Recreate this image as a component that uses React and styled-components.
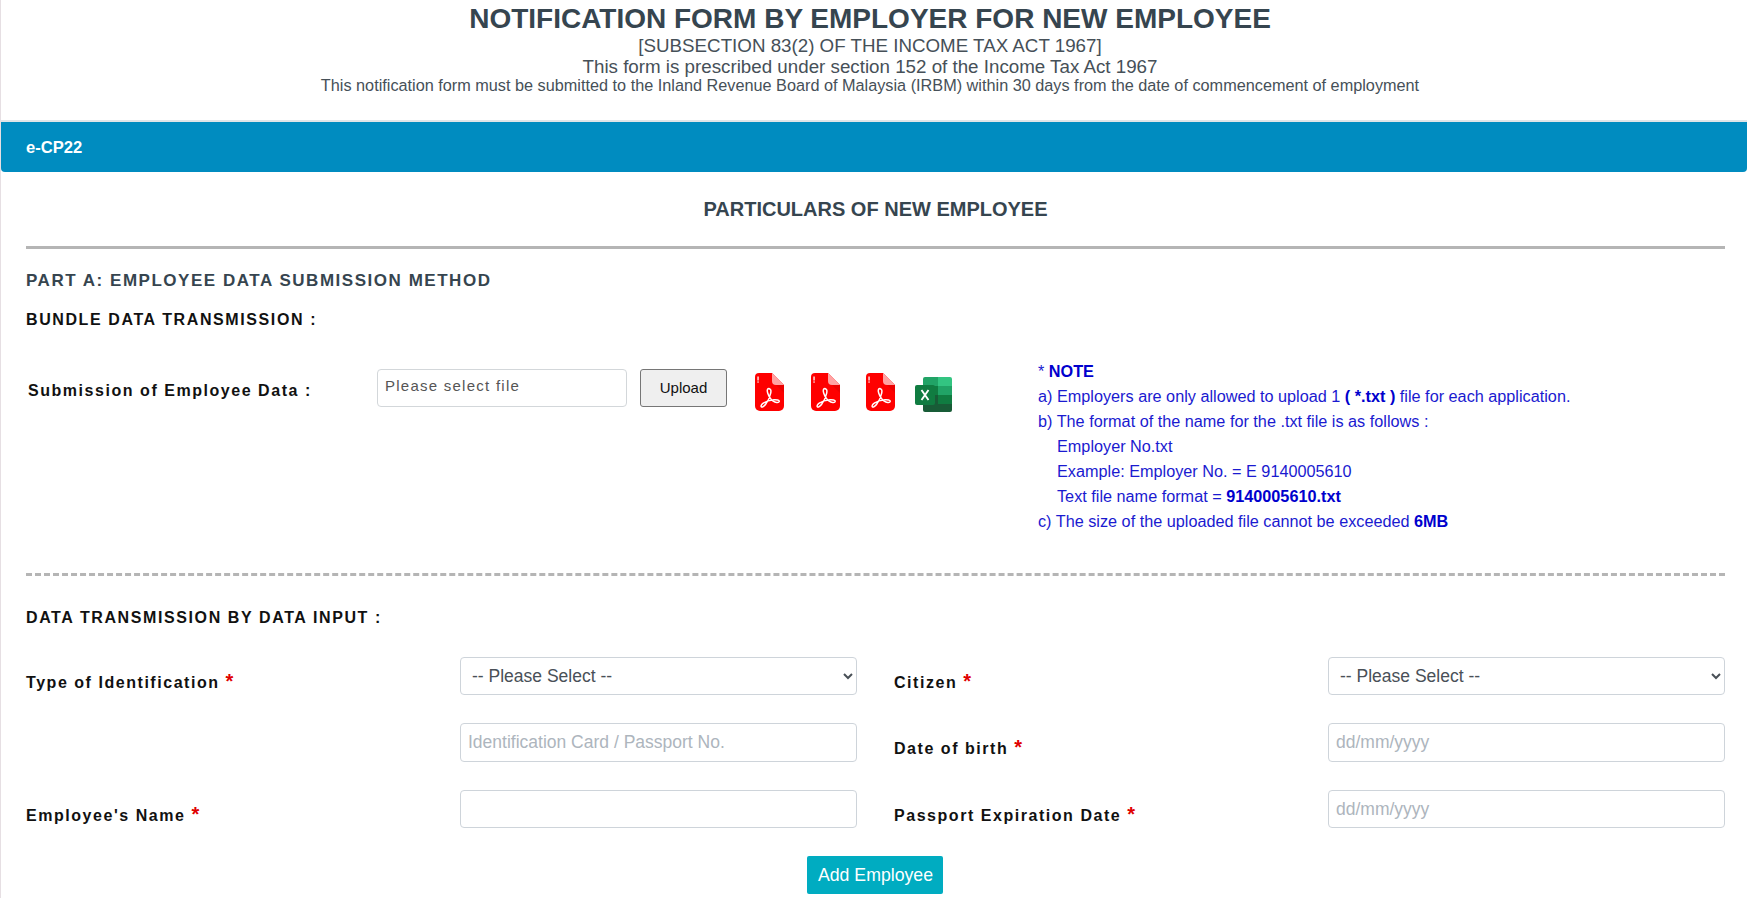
import React from "react";
import styled, { createGlobalStyle } from "styled-components";

const GlobalStyle = createGlobalStyle`
  html, body {
    margin: 0;
    padding: 0;
    background: #fff;
    overflow: hidden;
  }
  * { box-sizing: border-box; }
`;

const Page = styled.div`
  width: 1747px;
  height: 898px;
  overflow: hidden;
  border-left: 1px solid #e6dfe3;
  font-family: "Liberation Sans", Arial, sans-serif;
  background: #fff;
`;

const Header = styled.header`
  height: 122px;
  padding-top: 2px;
  padding-right: 8px;
  text-align: center;
  color: #465058;
  border-bottom: 2px solid #dfe5e8;
`;

const Title = styled.h1`
  margin: 0;
  font-size: 28px;
  line-height: 33px;
  font-weight: 700;
  color: #36454f;
`;

const SubLine = styled.div`
  font-size: ${(p) => p.$size}px;
  line-height: ${(p) => p.$height}px;
`;

const Bar = styled.div`
  height: 50px;
  padding-left: 25px;
  padding-top: 1px;
  display: flex;
  align-items: center;
  background: #008cc0;
  color: #fff;
  font-size: 16.6px;
  font-weight: 700;
  border-radius: 0 0 4px 4px;
`;

const Body = styled.div`
  padding: 0 21px 0 25px;
`;

const SectionTitle = styled.h2`
  margin: 0;
  height: 74px;
  padding-top: 25px;
  padding-right: 1px;
  text-align: center;
  font-size: 20px;
  line-height: 24px;
  font-weight: 700;
  color: #36454f;
`;

const Rule = styled.hr`
  margin: 0 1px 0 0;
  border: 0;
  border-top: 3px ${(p) => (p.$dashed ? "dashed" : "solid")} #b5b5b5;
`;

const PartTitle = styled.h3`
  margin: 22px 0 0;
  font-size: 17px;
  line-height: 20px;
  letter-spacing: 1.53px;
  font-weight: 700;
  color: #36454f;
`;

const GroupTitle = styled.h4`
  margin: ${(p) => p.$top}px 0 0;
  font-size: 16px;
  line-height: 20px;
  letter-spacing: 1.6px;
  font-weight: 700;
  color: #111;
`;

const UploadRow = styled.div`
  display: flex;
  align-items: flex-start;
  height: 204px;
  margin-top: 39px;
`;

const UploadLabel = styled.label`
  width: 351px;
  margin-top: 12px;
  padding-left: 2px;
  font-size: 16px;
  line-height: 20px;
  font-weight: 700;
  letter-spacing: 1.54px;
  color: #111;
`;

const FileBox = styled.div`
  width: 250px;
  height: 38px;
  padding: 6px 7px;
  border: 1px solid #d3d7da;
  border-radius: 4px;
  font-size: 15px;
  line-height: 20px;
  letter-spacing: 1.25px;
  color: #555;
`;

const UploadButton = styled.button`
  width: 87px;
  height: 38px;
  margin-left: 13px;
  padding: 0 0 2px;
  background: #efefef;
  border: 1px solid #767676;
  border-radius: 3px;
  font-family: inherit;
  font-size: 15px;
  color: #111;
`;

const IconRow = styled.div`
  display: flex;
  align-items: flex-start;
  width: 311px;
  padding-left: 28px;
  margin-top: 4px;
`;

const IconLink = styled.a`
  display: block;
  width: ${(p) => p.$width}px;
  margin-right: ${(p) => p.$gap}px;
  margin-top: ${(p) => p.$top || 0}px;
  line-height: 0;
`;

const Note = styled.div`
  margin-top: -10px;
  font-size: 16.24px;
  line-height: 25px;
  color: #1a1ad0;
  b { color: #0000cd; }
`;

const NoteIndent = styled.div`
  padding-left: 19px;
`;

const FormGrid = styled.div`
  display: grid;
  grid-template-columns: 434px 397px 471px 397px;
  margin-top: 29px;
`;

const FieldLabel = styled.label`
  display: block;
  padding-left: ${(p) => (p.$right ? 37 : 0)}px;
  padding-top: 14px;
  font-size: 16px;
  line-height: 20px;
  font-weight: 700;
  letter-spacing: 1.54px;
  color: #111;
`;

const Req = styled.span`
  color: #e00000;
  font-size: 20px;
`;

const Cell = styled.div`
  margin-bottom: ${(p) => p.$gap}px;
`;

const Select = styled.select`
  display: block;
  width: 100%;
  height: 38px;
  padding: 0 7px;
  border: 1px solid #ced4da;
  border-radius: 4px;
  background: #fff;
  font-family: inherit;
  font-size: 17.5px;
  color: #495057;
`;

const Input = styled.input`
  display: block;
  width: 100%;
  height: ${(p) => p.$h || 38}px;
  padding: 0 7px;
  border: 1px solid #ced4da;
  border-radius: 4px;
  font-family: inherit;
  font-size: 17.5px;
  color: #495057;
  &::placeholder { color: #adb5bd; opacity: 1; }
`;

const ButtonRow = styled.div`
  display: flex;
  justify-content: center;
  margin-top: 28px;
  padding-right: 3px;
`;

const AddButton = styled.button`
  width: 136px;
  height: 38px;
  padding: 0 0 0 2px;
  border: 0;
  border-radius: 2px;
  background: #00acc1;
  color: #fff;
  font-family: inherit;
  font-size: 17.7px;
`;

function PdfIcon() {
  return (
    <svg width="29" height="38" viewBox="0 0 29 38">
      <path d="M4 0H17L29 12V33a5 5 0 0 1-5 5H5a5 5 0 0 1-5-5V4a4 4 0 0 1 4-4Z" fill="#fe0000" />
      <path d="M21 12L29 20V12Z" fill="#d80000" opacity="0.5" />
      <path d="M17 0L29 12H21a4 4 0 0 1-4-4Z" fill="#ffa3a3" />
      <rect x="2.4" y="3.5" width="1.3" height="4" fill="#fff" />
      <rect x="2.4" y="8.4" width="1.3" height="1.3" fill="#fff" />
      <path
        d="M13.700 15.500c-1.500 0-1.800 2-1 4.500c1 3.200 2.800 6.400 5.500 8.200c1.800 1.200 5.500 2 6 .4c.4-1.500-2.700-2.100-5.200-1.900c-3.500 .3-8 1.600-10.700 3.500c-1.700 1.200-2.700 3-2 3.600c.9 .7 2.800-.5 4.200-2.300c2.300-3 4.600-8.200 5.200-11.300c.5-2.500 .1-4.200-1-4.200Z"
        fill="none"
        stroke="#fff"
        strokeWidth="1.5"
        strokeLinejoin="round"
      />
    </svg>
  );
}

function ExcelIcon() {
  return (
    <svg width="37" height="36" viewBox="0 0 37 36">
      <path d="M8 2a2 2 0 0 1 2-2H23V9H8Z" fill="#21a366" />
      <path d="M23 0H35a2 2 0 0 1 2 2V9H23Z" fill="#33c481" />
      <rect x="8" y="9" width="15" height="9" fill="#107c41" />
      <rect x="23" y="9" width="14" height="9" fill="#21a366" />
      <rect x="8" y="18" width="15" height="9" fill="#185c37" />
      <rect x="23" y="18" width="14" height="9" fill="#107c41" />
      <path d="M8 27H37V33a2 2 0 0 1-2 2H10a2 2 0 0 1-2-2Z" fill="#185c37" />
      <rect x="0" y="8" width="20" height="20" rx="2" fill="#107c41" />
      <path d="M6.500 13L13.500 23M13.500 13L6.500 23" fill="none" stroke="#fff" strokeWidth="1.9" />
    </svg>
  );
}

export default function App() {
  return (
    <Page>
      <GlobalStyle />
      <Header>
        <Title>NOTIFICATION FORM BY EMPLOYER FOR NEW EMPLOYEE</Title>
        <SubLine $size={18.76} $height={21}>[SUBSECTION 83(2) OF THE INCOME TAX ACT 1967]</SubLine>
        <SubLine $size={18.76} $height={21}>This form is prescribed under section 152 of the Income Tax Act 1967</SubLine>
        <SubLine $size={16.26} $height={17}>
          This notification form must be submitted to the Inland Revenue Board of Malaysia (IRBM) within 30 days from the date of commencement of employment
        </SubLine>
      </Header>
      <Bar>e-CP22</Bar>
      <Body>
        <SectionTitle>PARTICULARS OF NEW EMPLOYEE</SectionTitle>
        <Rule />
        <PartTitle>PART A: EMPLOYEE DATA SUBMISSION METHOD</PartTitle>
        <GroupTitle $top={19}>BUNDLE DATA TRANSMISSION :</GroupTitle>
        <UploadRow>
          <UploadLabel>Submission of Employee Data :</UploadLabel>
          <FileBox>Please select file</FileBox>
          <UploadButton>Upload</UploadButton>
          <IconRow>
            <IconLink $width={29} $gap={27}><PdfIcon /></IconLink>
            <IconLink $width={29} $gap={26}><PdfIcon /></IconLink>
            <IconLink $width={29} $gap={20}><PdfIcon /></IconLink>
            <IconLink $width={37} $gap={0} $top={4}><ExcelIcon /></IconLink>
          </IconRow>
          <Note>
            <div>* <b>NOTE</b></div>
            <div>a) Employers are only allowed to upload 1 <b>( *.txt )</b> file for each application.</div>
            <div>b) The format of the name for the .txt file is as follows :</div>
            <NoteIndent>Employer No.txt</NoteIndent>
            <NoteIndent>Example: Employer No. = E 9140005610</NoteIndent>
            <NoteIndent>Text file name format = <b>9140005610.txt</b></NoteIndent>
            <div>c) The size of the uploaded file cannot be exceeded <b>6MB</b></div>
          </Note>
        </UploadRow>
        <Rule $dashed />
        <GroupTitle $top={32}>DATA TRANSMISSION BY DATA INPUT :</GroupTitle>
        <FormGrid>
          <FieldLabel>Type of Identification <Req>*</Req></FieldLabel>
          <Cell $gap={28}>
            <Select defaultValue="">
              <option value="">-- Please Select --</option>
            </Select>
          </Cell>
          <FieldLabel $right>Citizen <Req>*</Req></FieldLabel>
          <Cell $gap={28}>
            <Select defaultValue="">
              <option value="">-- Please Select --</option>
            </Select>
          </Cell>

          <div />
          <Cell $gap={28}>
            <Input $h={39} placeholder="Identification Card / Passport No." />
          </Cell>
          <FieldLabel $right>Date of birth <Req>*</Req></FieldLabel>
          <Cell $gap={28}>
            <Input $h={39} placeholder="dd/mm/yyyy" />
          </Cell>

          <FieldLabel>Employee's Name <Req>*</Req></FieldLabel>
          <Cell $gap={0}>
            <Input />
          </Cell>
          <FieldLabel $right>Passport Expiration Date <Req>*</Req></FieldLabel>
          <Cell $gap={0}>
            <Input placeholder="dd/mm/yyyy" />
          </Cell>
        </FormGrid>
        <ButtonRow>
          <AddButton>Add Employee</AddButton>
        </ButtonRow>
      </Body>
    </Page>
  );
}
